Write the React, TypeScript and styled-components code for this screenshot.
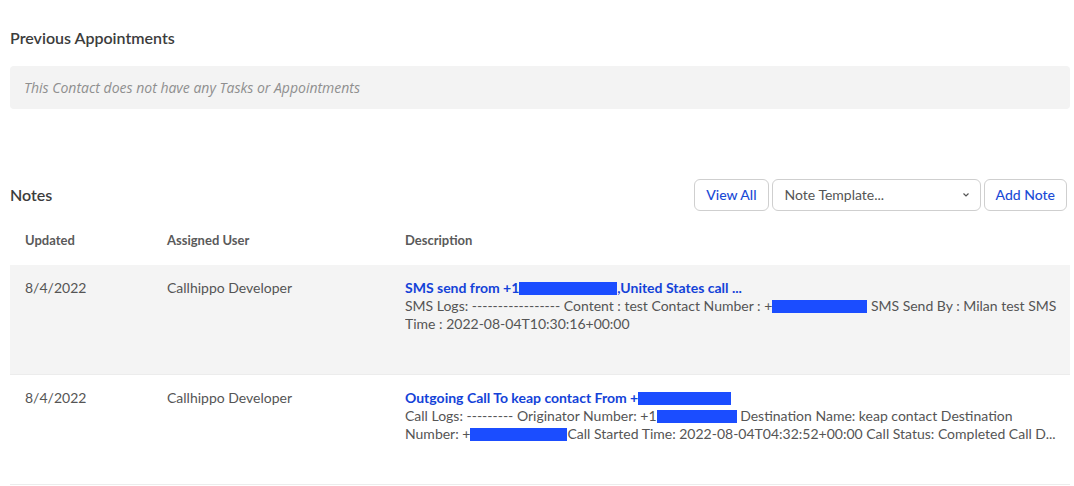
import React from "react";
import styled, { createGlobalStyle } from "styled-components";

const GlobalStyle = createGlobalStyle`
  html, body {
    margin: 0;
    padding: 0;
    background: #fff;
  }
  body {
    font-family: Lato, "Liberation Sans", Arial, sans-serif;
    color: #555;
  }
`;

type Note = {
  updated: string;
  user: string;
  title: React.ReactNode;
  body: React.ReactNode;
  shaded?: boolean;
};

// redacted phone numbers
const Masked = styled.span<{ $w: number }>`
  display: inline-block;
  width: ${(p) => p.$w}px;
  height: 13px;
  background: #1b4dff;
  vertical-align: -2px;
`;

const notes: Note[] = [
  {
    updated: "8/4/2022",
    user: "Callhippo Developer",
    shaded: true,
    title: (
      <>
        SMS send from +1<Masked $w={98} />,United States call ...
      </>
    ),
    body: (
      <>
        SMS Logs: ----------------- Content : test Contact Number : +<Masked $w={95} /> SMS Send By : Milan test SMS
        Time : 2022-08-04T10:30:16+00:00
      </>
    ),
  },
  {
    updated: "8/4/2022",
    user: "Callhippo Developer",
    title: (
      <>
        Outgoing Call To keap contact From +<Masked $w={93} />
      </>
    ),
    body: (
      <>
        Call Logs: --------- Originator Number: +1<Masked $w={80} /> Destination Name: keap contact Destination
        Number: +<Masked $w={97} />Call Started Time: 2022-08-04T04:32:52+00:00 Call Status: Completed Call D...
      </>
    ),
  },
];

export default function App() {
  return (
    <>
      <GlobalStyle />
      <Page>
        <Section>
          <SectionTitle>Previous Appointments</SectionTitle>
          <EmptyBox>This Contact does not have any Tasks or Appointments</EmptyBox>
        </Section>

        <NotesHeader>
          <SectionTitle>Notes</SectionTitle>
          <Toolbar>
            <Button>View All</Button>
            <Select>
              <span>Note Template...</span>
              <svg width="10" height="10" viewBox="0 0 10 10">
                <path d="M2.5 3.5 L5 6 L7.5 3.5" fill="none" stroke="#555" strokeWidth="1.2" />
              </svg>
            </Select>
            <Button>Add Note</Button>
          </Toolbar>
        </NotesHeader>

        <Table>
          <HeadRow>
            <HeadCell>Updated</HeadCell>
            <HeadCell>Assigned User</HeadCell>
            <HeadCell>Description</HeadCell>
          </HeadRow>
          {notes.map((n, i) => (
            <Row key={i} $shaded={n.shaded}>
              <Cell>{n.updated}</Cell>
              <Cell>{n.user}</Cell>
              <Cell>
                <NoteTitle>{n.title}</NoteTitle>
                <NoteBody>{n.body}</NoteBody>
              </Cell>
            </Row>
          ))}
        </Table>
      </Page>
    </>
  );
}

const Page = styled.div`
  width: 1060px;
  padding: 0 4px 0 10px;
`;

const Section = styled.div`
  padding-top: 27px;
`;

const SectionTitle = styled.div`
  font-size: 16px;
  font-weight: 600;
  color: #3c3c3c;
  line-height: 22px;
`;

const EmptyBox = styled.div`
  margin-top: 17px;
  height: 43px;
  display: flex;
  align-items: center;
  padding: 0 14px;
  background: #f3f3f3;
  border-radius: 4px;
  font-family: "Open Sans", Lato, sans-serif;
  font-size: 14px;
  font-style: italic;
  color: #8f8f8f;
`;

const NotesHeader = styled.div`
  margin-top: 69px;
  display: flex;
  align-items: center;
  justify-content: space-between;
  height: 33px;
`;

const Toolbar = styled.div`
  display: flex;
  gap: 3px;
  padding-right: 3px;
`;

const Button = styled.button`
  height: 32px;
  padding: 0 11px;
  background: #fff;
  border: 1px solid #cfcfcf;
  border-radius: 6px;
  font-family: inherit;
  font-size: 14px;
  font-weight: 500;
  color: #1a4bd6;
`;

const Select = styled.div`
  width: 209px;
  height: 32px;
  box-sizing: border-box;
  display: flex;
  align-items: center;
  justify-content: space-between;
  padding: 0 9px 0 12px;
  border: 1px solid #cfcfcf;
  border-radius: 6px;
  font-size: 14px;
  color: #555;
`;

const Table = styled.div`
  margin-top: 13px;
`;

const grid = `
  display: grid;
  grid-template-columns: 142px 238px 1fr;
`;

const HeadRow = styled.div`
  ${grid}
  height: 41px;
  box-sizing: border-box;
  padding-top: 8px;
`;

const HeadCell = styled.div`
  padding-left: 15px;
  font-size: 13px;
  line-height: 16px;
  font-weight: 700;
  color: #5a5a5a;
`;

const Row = styled.div<{ $shaded?: boolean }>`
  ${grid}
  height: 110px;
  box-sizing: border-box;
  background: ${(p) => (p.$shaded ? "#f4f4f4" : "#fff")};
  border-bottom: 1px solid #ececec;
`;

const Cell = styled.div`
  padding: 14px 6px 0 15px;
  font-size: 14px;
  line-height: 18px;
  color: #555;
`;

const NoteTitle = styled.div`
  font-weight: 700;
  color: #1342d8;
  white-space: nowrap;
  overflow: hidden;
  text-overflow: ellipsis;
`;

const NoteBody = styled.div`
  display: -webkit-box;
  -webkit-line-clamp: 2;
  -webkit-box-orient: vertical;
  overflow: hidden;
`;
